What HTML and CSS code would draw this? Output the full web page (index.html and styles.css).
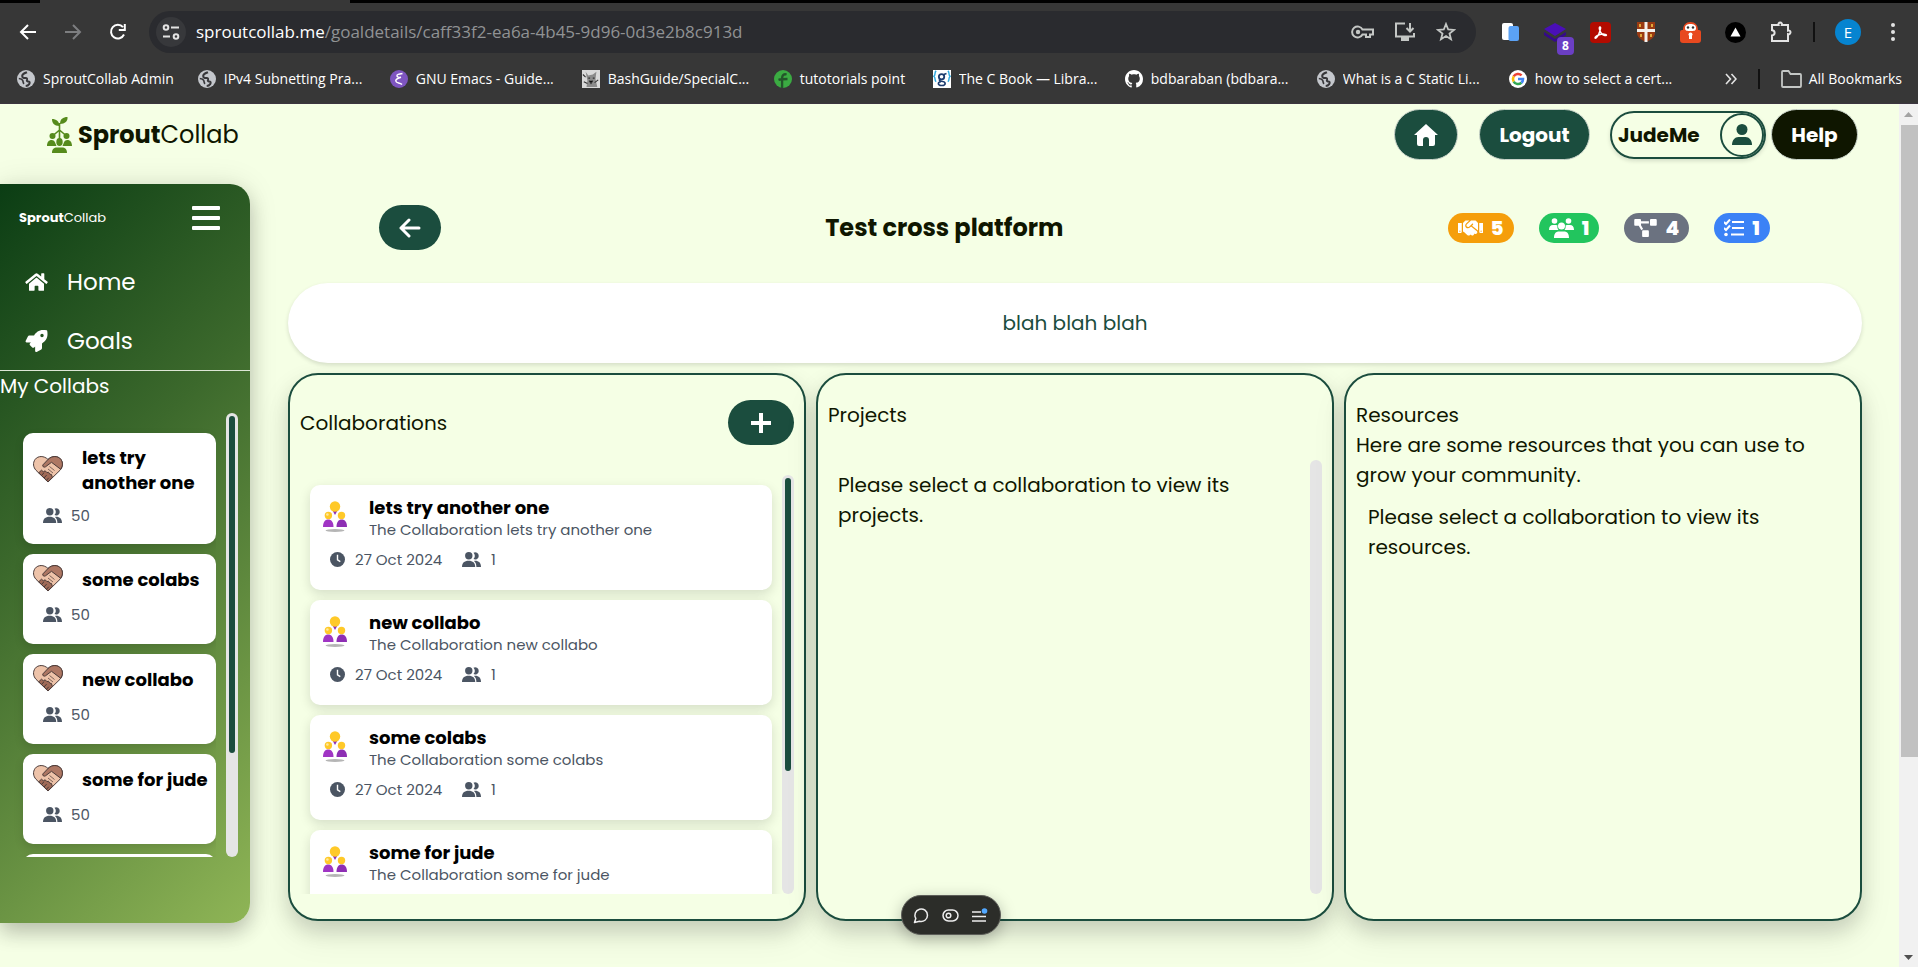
FILE: index.html
```html
<!DOCTYPE html>
<html lang="en">
<head>
<meta charset="utf-8">
<title>SproutCollab</title>
<link rel="stylesheet" href="styles.css">
</head>
<body>
<svg class="sprite" aria-hidden="true">
  <symbol id="i-globe" viewBox="0 0 18 18"><circle cx="9" cy="9" r="9" fill="#c4c7cc"/><path d="M10 2.200C8 3 5.600 3.600 5.200 5.600c-.3 2 1.500 2.600 3.100 2.400 1.600-.2 2 .6 1.700 1.700-.3 1-.2 1.800.9 1.700 1.500-.1 2.400 1 1.300 2.700-.8 1.200-2.200 1.900-3.500 2" fill="none" stroke="#37373a" stroke-width="2"/><path d="M1.800 8.500c1.500.1 3.300.5 3.900 1.900.5 1.200.3 2.500 1.300 3.500" fill="none" stroke="#37373a" stroke-width="1.600"/></symbol>
  <symbol id="i-users" viewBox="0 0 19 15"><path d="M11.500.7a3.600 3.600 0 1 1 0 6.400 5 5 0 0 0 0-6.400z"/><circle cx="6.800" cy="3.800" r="3.700"/><path d="M0 15c0-4 2.300-6.200 6.600-6.200S13.200 11 13.200 15z"/><path d="M12 8.900c4.400-.5 7 1.800 7 6.100h-4.600c0-2.800-.7-4.700-2.400-6.100z"/></symbol>
  <symbol id="i-clock" viewBox="0 0 16 16"><circle cx="8" cy="8" r="8"/><path d="M8 3v5.500l3 1.800" fill="none" stroke="#fff" stroke-width="1.500"/></symbol>
  <symbol id="i-heart" viewBox="0 0 30 27"><path d="M15 3.500C11-.5 5-.3 2.200 3.300-.5 7 .3 11.300 3 14.300L15 26l12-11.700c2.700-3 3.500-7.300.8-11C25-.3 19-.5 15 3.500z" fill="#eec3a9" stroke="#4a3a38"/><path d="M15 3.500C19-.5 25-.3 27.800 3.300c2.400 3.300 2 7-.2 9.900L18.500 6.300l-6 4.500c-1.600 1-3.400-.4-2.600-1.900z" fill="#ad7763" stroke="#4a3a38"/><path d="m5.700 16.800 2.800-2.600 1.800 1.600 1.900-1 1.700 1.800 1.600-.4 1.300 2 1.600.2 1 3-4.400 4.400z" fill="#a06a57" stroke="#4a3a38"/><path d="m8.500 19.500 2.400-2.700M11 22l2.600-2.900M13.500 24.300l2.200-2.500" stroke="#4a3a38"/><path d="m16.500 10.500 5 4M15 13l5 4" stroke="#4a3a38" stroke-width=".7"/></symbol>
  <symbol id="i-team" viewBox="0 0 24 31"><ellipse cx="12" cy="29.500" rx="9.500" ry="1.500" fill="#b5b5b5"/><path d="M0 26c0-5 2-7.500 5.200-7.500S10.500 21 10.500 26z" fill="#a035c4"/><path d="M13.500 26c0-5 2-7.500 5.200-7.500S24 21 24 26z" fill="#8e2fb4"/><path d="M9.800 10h4.400L12 14z" fill="#8e2fb4"/><circle cx="5.400" cy="14.500" r="3.700" fill="#ffc928"/><circle cx="18.500" cy="14.500" r="3.700" fill="#ffc928"/><circle cx="4.400" cy="13.500" r="1.300" fill="#ffe9a0"/><circle cx="12" cy="5.500" r="5.200" fill="#ffc928"/></symbol>
</svg>

<header class="browser">
  <div class="strip"><div class="tab-foot"></div></div>
  <div class="toolbar">
    <nav class="nav-buttons">
      <button aria-label="Back"><svg width="18" height="18" viewBox="0 0 18 18"><path d="M17 9H2M9 2 2 9l7 7" fill="none" stroke="#fff" stroke-width="2"/></svg></button>
      <button aria-label="Forward"><svg width="18" height="18" viewBox="0 0 18 18"><path d="M1 9h15M9 2l7 7-7 7" fill="none" stroke="#7d7e80" stroke-width="2"/></svg></button>
      <button aria-label="Reload"><svg width="18" height="18" viewBox="0 0 18 18"><path d="M15 11.500A6.800 6.800 0 1 1 14 4.200M15.800 1v6h-6" fill="none" stroke="#fff" stroke-width="2"/></svg></button>
    </nav>
    <div class="address">
      <button class="site-info" aria-label="Site information"><svg width="18" height="16" viewBox="0 0 18 16"><g fill="none" stroke="#e3e3e3" stroke-width="2"><circle cx="4" cy="3.500" r="2.300"/><path d="M9 3.500h8M1 12.500h7"/><circle cx="14" cy="12.500" r="2.300"/></g></svg></button>
      <p class="url"><span class="host">sproutcollab.me</span>/goaldetails/caff33f2-ea6a-4b45-9d96-0d3e2b8c913d</p>
      <button aria-label="Passwords"><svg width="23" height="16" viewBox="0 0 23 16"><g fill="none" stroke="#c4c7c5" stroke-width="2"><path d="M11.500 5.500a5.500 5.500 0 1 0 0 5H15V13h4v-2.500h3v-5z"/></g><circle cx="7" cy="8" r="2.200" fill="#c4c7c5"/></svg></button>
      <button aria-label="Install"><svg width="22" height="20" viewBox="0 0 22 20"><path d="M11 1.500H2v13h18V11M16 1v8M12.500 6l3.500 3.500L19.500 6" fill="none" stroke="#c4c7c5" stroke-width="2"/><path d="M7 15h8v4H7z" fill="#c4c7c5"/></svg></button>
      <button aria-label="Bookmark"><svg width="20" height="20" viewBox="0 0 20 20"><path d="m10 2 2.200 5.500 5.800.4-4.500 3.700 1.500 5.700-5-3.200-5 3.200 1.500-5.700L2 7.900l5.800-.4z" fill="none" stroke="#c4c7c5" stroke-width="1.800"/></svg></button>
    </div>
    <div class="extensions">
      <button aria-label="Reader"><svg width="18" height="20" viewBox="0 0 18 20"><rect width="11" height="17" y="1" rx="2" fill="#fff"/><rect x="6.500" y="4" width="10.500" height="15" rx="2" fill="#5ba2f5"/></svg></button>
      <button class="badged" aria-label="Blocker"><svg width="24" height="20" viewBox="0 0 24 20"><path d="M11 1 22 7 11 14 0 7z" fill="#4a0fb8"/><path d="m0 10 11 7 11-7v3l-11 7-11-7z" fill="#35088c"/></svg><span class="badge">8</span></button>
      <button aria-label="PDF"><svg width="21" height="21" viewBox="0 0 21 21"><rect width="21" height="21" rx="4" fill="#b30b00"/><path d="M10 5c-1.500 0-.5 4 1.500 6.500s5 2.500 5 1.500-4-1.300-6.500-.5S4.500 15 5 16s3-1.500 4-4.500S11.500 5 10 5z" fill="none" stroke="#fff" stroke-width="1.400"/></svg></button>
      <button aria-label="Shield"><svg width="18" height="20" viewBox="0 0 18 20"><path d="M0 0h18v11c0 4-4 7-9 9-5-2-9-5-9-9z" fill="#9a3a12"/><path d="M7.500 0h3v7H18v3h-7.500v10h-3V10H0V7h7.500z" fill="#f5f2ee"/><path d="M3 2v3M15 2v3M4 12v3M14 12v3" stroke="#e0a93c" stroke-width="2"/></svg></button>
      <button aria-label="Privacy"><svg width="21" height="21" viewBox="0 0 21 21"><path d="M3 8c0-5 3-8 7.500-8S18 3 18 8h1a2 2 0 0 1 2 2v8a3 3 0 0 1-3 3H3a3 3 0 0 1-3-3v-8a2 2 0 0 1 2-2z" fill="#e8491f"/><path d="M5 6c0-3 2-4 5.500-4S16 3 16 6s-2 3-5.500 3S5 9 5 6z" fill="#fff"/><circle cx="8" cy="5.500" r="1.200" fill="#333"/><circle cx="13" cy="5.500" r="1.200" fill="#333"/><path d="M9 17v-4h3v4z" fill="#fff"/><circle cx="10.500" cy="12.500" r="2" fill="#fff"/></svg></button>
      <button aria-label="Deploy"><svg width="21" height="21" viewBox="0 0 21 21"><circle cx="10.500" cy="10.500" r="10.500"/><path d="m10.500 5.500 5 9h-10z" fill="#fff"/></svg></button>
      <button aria-label="Extensions"><svg width="22" height="22" viewBox="0 0 22 22"><path d="M2 4h6.500a1.800 1.800 0 1 1 3.400 0H18v5.500a1.900 1.900 0 1 1 0 3.600V20H2v-5.500c3.500-.3 3.500-5 0-5.300z" fill="none" stroke="#e3e3e3" stroke-width="2"/></svg></button>
      <span class="divider"></span>
      <button class="avatar">E</button>
      <button aria-label="Menu"><svg width="6" height="20" viewBox="0 0 6 20" fill="#e3e3e3"><circle cx="3" cy="3" r="2"/><circle cx="3" cy="10" r="2"/><circle cx="3" cy="17" r="2"/></svg></button>
    </div>
  </div>
  <nav class="bookmarks">
    <a href="#"><svg class="fav"><use href="#i-globe"/></svg><span>SproutCollab Admin</span></a>
    <a href="#"><svg class="fav"><use href="#i-globe"/></svg><span class="cut">IPv4 Subnetting Pra...</span></a>
    <a href="#"><svg class="fav" viewBox="0 0 18 18"><circle cx="9" cy="9" r="9" fill="#7e55c0"/><path d="M12.500 3.500C9 4 6.500 4.500 7 6s3 1.500 4 1.200C8 8 5.500 9 5.800 11c.3 2.500 4 1.300 6.200 3.500" fill="none" stroke="#fff" stroke-width="1.500"/></svg><span class="cut">GNU Emacs - Guide...</span></a>
    <a href="#"><svg class="fav" viewBox="0 0 20 20"><path fill="#d9d9d9" d="M0 0h20v20H0z"/><path d="M4 2l3 4 5-1 4-3-1 8 2 9H5l1-7z" fill="#8b8b8b"/><path d="M1 5l3 3M2 13l4 2M14 14l4-3M8 12l2 3 2-3M7 9h2M12 9h2" stroke="#333" stroke-width="1.200"/></svg><span class="cut">BashGuide/SpecialC...</span></a>
    <a href="#"><svg class="fav" viewBox="0 0 20 20"><circle cx="10" cy="10" r="10" fill="#3bab42"/><path d="M9 20V9c0-3 2-5 5-4M5 11c3-1 7-1 10-1" fill="none" stroke="#23552a" stroke-width="2.600"/></svg><span class="mid">tutotorials point</span></a>
    <a href="#"><svg class="fav" viewBox="0 0 20 20"><path fill="#fff" d="M0 0h20v20H0z"/><path d="M3.500 1C1 3 3.500 5 1 7c2.500 2 0 4 2.500 6M16.500 1C19 3 16.500 5 19 7c-2.500 2 0 4-2.500 6" fill="none" stroke="#2ba8e0" stroke-width="1.600"/><circle cx="9.500" cy="7.500" r="3" fill="none" stroke="#1d3c6e" stroke-width="2"/><path d="M12 5l3-1M7.500 10.500c-2 3 6 1 6 4.500 0 3-7.500 3-7.500 0 0-1.500 1.500-2 3-2" fill="none" stroke="#1d3c6e" stroke-width="1.800"/></svg><span class="cut">The C Book — Libra...</span></a>
    <a href="#"><svg class="fav" viewBox="0 0 16 16"><path fill="#fff" d="M8 0C3.580 0 0 3.580 0 8c0 3.540 2.290 6.530 5.470 7.590.4.070.55-.17.55-.38 0-.19-.01-.82-.01-1.490-2.010.37-2.530-.49-2.690-.94-.09-.23-.48-.94-.82-1.130-.28-.15-.68-.52-.01-.53.63-.01 1.080.58 1.230.82.72 1.210 1.870.87 2.330.66.070-.52.28-.87.51-1.070-1.780-.2-3.640-.89-3.640-3.950 0-.87.31-1.590.82-2.150-.08-.2-.36-1.020.08-2.120 0 0 .67-.21 2.200.82.64-.18 1.320-.27 2-.27s1.360.09 2 .27c1.530-1.040 2.200-.82 2.200-.82.44 1.100.16 1.920.08 2.120.51.56.82 1.270.82 2.150 0 3.070-1.870 3.750-3.650 3.950.29.25.54.73.54 1.480 0 1.070-.01 1.930-.01 2.200 0 .21.15.46.55.38A8.010 8.010 0 0 0 16 8c0-4.420-3.580-8-8-8z"/></svg><span class="cut">bdbaraban (bdbara...</span></a>
    <a href="#"><svg class="fav"><use href="#i-globe"/></svg><span class="cut">What is a C Static Li...</span></a>
    <a href="#"><svg class="fav" viewBox="0 0 20 20"><circle cx="10" cy="10" r="10" fill="#fff"/><g fill="none" stroke-width="2.800"><path d="M14 6a5.600 5.600 0 0 0-8.800 1.200" stroke="#ea4335"/><path d="M5.200 7.200a5.600 5.600 0 0 0 0 5.600" stroke="#fbbc05"/><path d="M5.200 12.800a5.600 5.600 0 0 0 8.600 1.400" stroke="#34a853"/><path d="M13.800 14.200A5.600 5.600 0 0 0 15.600 10H10" stroke="#4285f4"/></g></svg><span class="cut">how to select a cert...</span></a>
    <div class="bookmarks-end">
      <button aria-label="More bookmarks"><svg width="12" height="12" viewBox="0 0 12 12"><path d="m1 1 4.500 5L1 11M6.500 1 11 6l-4.500 5" fill="none" stroke="#e3e3e3" stroke-width="1.600"/></svg></button>
      <span class="divider"></span>
      <a href="#"><svg width="21" height="18" viewBox="0 0 21 18"><path d="M1 2a1 1 0 0 1 1-1h5.500l2 3H19a1 1 0 0 1 1 1v11a1 1 0 0 1-1 1H2a1 1 0 0 1-1-1z" fill="none" stroke="#c4c7c5" stroke-width="1.800"/></svg><span>All Bookmarks</span></a>
    </div>
  </nav>
</header>

<div class="viewport">
  <div class="app">
    <header class="site-header">
      <a href="#" class="brand">
        <svg width="25" height="36" viewBox="0 0 25 36" fill="#568b1c"><path d="M12.500 9C7 9 5 6 5 2c4 0 7.500 2.500 7.500 7z"/><path d="M13 7c0-5 3-7 7.500-7C21 4 18 7 13 7z"/><path d="M12.500 6v18M12.500 13 5.500 19M12.500 13l7 6" stroke="#568b1c" stroke-width="1.600"/><circle cx="5.500" cy="19" r="3"/><circle cx="19.500" cy="19" r="3"/><ellipse cx="12.500" cy="25" rx="3.200" ry="4"/><path d="M0 29c0-4 2-6 4.500-6 2 0 3.200 1 3.800 3l1.200 3zM15.500 29l1.200-3c.6-2 1.800-3 3.800-3 2.500 0 4.500 2 4.500 6zM5 36c0-4 2-5.500 5-5.500h5c3 0 5 1.500 5 5.500z"/></svg>
        <span><b>Sprout</b>Collab</span>
      </a>
      <nav class="account">
        <button class="pill home" aria-label="Home"><svg width="24" height="22" viewBox="0 0 24 22" fill="#fff"><path d="M12 0 24 11h-3v9a2 2 0 0 1-2 2h-4v-6a3 3 0 0 0-6 0v6H5a2 2 0 0 1-2-2v-9H0z"/></svg></button>
        <button class="pill logout">Logout</button>
        <button class="user"><span>JudeMe</span><span class="user-icon"><svg width="20" height="21" viewBox="0 0 20 21" fill="#1b4d3e"><circle cx="10" cy="5.500" r="5.500"/><path d="M0 21c0-5 3-8 6.500-8h7c3.500 0 6.500 3 6.500 8z"/></svg></span></button>
        <button class="pill help">Help</button>
      </nav>
    </header>

    <div class="workspace">
      <aside class="sidebar">
        <div class="side-top">
          <span class="side-brand"><b>Sprout</b>Collab</span>
          <button aria-label="Toggle menu"><svg width="28" height="25" viewBox="0 0 28 25" fill="#fff"><rect width="28" height="4" rx="1"/><rect y="10" width="28" height="4" rx="1"/><rect y="20" width="28" height="4" rx="1"/></svg></button>
        </div>
        <nav class="side-nav">
          <a href="#"><svg width="23" height="20" viewBox="0 0 576 512" fill="#fff"><path d="M280.370 148.260L96 300.110V464a16 16 0 0 0 16 16l112.060-.29a16 16 0 0 0 15.920-16V368a16 16 0 0 1 16-16h64a16 16 0 0 1 16 16v95.640a16 16 0 0 0 16 16.050L464 480a16 16 0 0 0 16-16V300L295.670 148.260a12.190 12.190 0 0 0-15.300 0zM571.600 251.470L488 182.560V44.050a12 12 0 0 0-12-12h-56a12 12 0 0 0-12 12v72.610L318.470 43a48 48 0 0 0-61 0L4.340 251.470a12 12 0 0 0-1.600 16.900l25.500 31A12 12 0 0 0 45.150 301l235.220-193.740a12.190 12.190 0 0 1 15.300 0L530.900 301a12 12 0 0 0 16.900-1.600l25.500-31a12 12 0 0 0-1.700-16.930z"/></svg>Home</a>
          <a href="#"><svg width="23" height="22" viewBox="0 0 512 512" fill="#fff"><path d="M505.100 19.100C504 13.600 498.500 8.100 493 6.900 460.700 0 435.500 0 410.400 0 307.200 0 245.300 55.200 199 128H94.800c-16.300 0-35.500 11.900-42.900 26.500L2.500 253.300A28.400 28.400 0 0 0 0 264a24 24 0 0 0 24 24h103.800l-22.500 22.500c-11.300 11.300-13 32.200 0 45.200l50.900 50.900c11.200 11.200 32.200 13.200 45.300 0l22.500-22.500V488a24 24 0 0 0 24 24 28.600 28.600 0 0 0 10.700-2.500l98.700-49.400c14.700-7.300 26.600-26.500 26.600-42.900V312.800C456.600 266.500 512 204.400 512 101.700c0-25.200 0-50.400-6.900-82.600zM384 168a40 40 0 1 1 40-40 40 40 0 0 1-40 40z"/></svg>Goals</a>
        </nav>
        <h2>My Collabs</h2>
        <div class="side-scroll">
          <ul class="side-list">
            <li><svg class="heart"><use href="#i-heart"/></svg><b>lets try another one</b><span class="count"><svg class="users"><use href="#i-users"/></svg>50</span></li>
            <li><svg class="heart"><use href="#i-heart"/></svg><b>some colabs</b><span class="count"><svg class="users"><use href="#i-users"/></svg>50</span></li>
            <li><svg class="heart"><use href="#i-heart"/></svg><b>new collabo</b><span class="count"><svg class="users"><use href="#i-users"/></svg>50</span></li>
            <li><svg class="heart"><use href="#i-heart"/></svg><b>some for jude</b><span class="count"><svg class="users"><use href="#i-users"/></svg>50</span></li>
            <li></li>
          </ul>
          <div class="track"><div class="thumb side-thumb"></div></div>
        </div>
      </aside>

      <main class="goal">
        <div class="goal-head">
          <button class="round back" aria-label="Back"><svg width="22" height="20" viewBox="0 0 22 20"><path d="M20 10H2M10 2l-8 8 8 8" fill="none" stroke="#fff" stroke-width="3" stroke-linecap="round" stroke-linejoin="round"/></svg></button>
          <h1>Test cross platform</h1>
          <div class="stats">
            <span class="stat orange"><svg width="25" height="20" viewBox="0 0 640 512" fill="#fff"><path d="M434.700 64h-85.900c-8 0-15.700 3-21.600 8.400l-98.300 90c-.1.1-.2.3-.3.400-16.600 15.600-16.300 40.500-2.100 56 12.700 13.900 39.400 17.600 56.100 2.700.1-.1.3-.1.400-.2l79.900-73.200c6.500-5.900 16.700-5.500 22.600 1 6 6.500 5.500 16.600-1 22.600l-26.100 23.900L504 313.800c2.900 2.400 5.500 5 7.900 7.700V128l-54.600-54.600c-5.900-6-14.100-9.400-22.600-9.400zM544 128.200v223.900c0 17.700 14.300 32 32 32h64V128.200h-96zm48 223.900c-8.800 0-16-7.200-16-16s7.200-16 16-16 16 7.200 16 16-7.200 16-16 16zM0 384h64c17.700 0 32-14.300 32-32V128.200H0V384zm48-63.900c8.800 0 16 7.200 16 16s-7.200 16-16 16-16-7.200-16-16c0-8.900 7.200-16 16-16zm435.900 18.600L334.600 217.500l-30 27.500c-29.700 27.100-75.200 24.500-101.700-4.400-26.900-29.400-24.800-74.900 4.400-101.700L289.100 64h-83.800c-8.500 0-16.600 3.400-22.600 9.400L128 128v223.900h18.300l90.500 81.900c27.400 22.300 67.700 18.100 90-9.300l.2-.2 17.900 15.500c15.900 13 39.400 10.500 52.300-5.400l31.400-38.600 5.400 4.400c13.700 11.100 33.900 9.100 45-4.700l9.500-11.700c11.200-13.800 9.100-33.900-4.600-45.100z"/></svg>5</span>
            <span class="stat green"><svg width="25" height="20" viewBox="0 0 25 20" fill="#fff"><circle cx="5.500" cy="3" r="2.800"/><circle cx="19.500" cy="3" r="2.800"/><circle cx="12.500" cy="8" r="3.500"/><path d="M0 12c0-3.500 1.500-5 4-5h3c.7 0 1.200.2 1.500.5-.4 1.700 0 3.300 1 4.500zM25 12c0-3.500-1.500-5-4-5h-3c-.7 0-1.200.2-1.500.5.4 1.700 0 3.300-1 4.500zM5 20c0-4.500 2-6.500 5-6.500h5c3 0 5 2 5 6.500z"/></svg>1</span>
            <span class="stat gray"><svg width="23" height="18" viewBox="0 0 640 512" fill="#fff"><path d="M384 320H256c-17.670 0-32 14.330-32 32v128c0 17.670 14.330 32 32 32h128c17.670 0 32-14.330 32-32V352c0-17.670-14.330-32-32-32zM192 32c0-17.670-14.330-32-32-32H32C14.330 0 0 14.330 0 32v128c0 17.670 14.330 32 32 32h95.720l73.160 128.040C211.980 300.980 232.400 288 256 288h.28L192 175.510V128h224V64H192V32zM608 0H480c-17.670 0-32 14.330-32 32v128c0 17.670 14.330 32 32 32h128c17.670 0 32-14.330 32-32V32c0-17.670-14.330-32-32-32z"/></svg>4</span>
            <span class="stat blue"><svg width="20" height="18" viewBox="0 0 20 18"><path d="m0 3 2 2 4-4.500M0 9l2 2 4-4.500M8 3h12M8 9h12M7 15.500h13" fill="none" stroke="#fff" stroke-width="2"/><circle cx="2" cy="15.500" r="1.800" fill="#fff"/></svg>1</span>
          </div>
        </div>
        <p class="description">blah blah blah</p>
        <div class="columns">
          <section class="panel">
            <div class="panel-head"><h2>Collaborations</h2><button class="round add" aria-label="Add collaboration"><svg width="20" height="20" viewBox="0 0 20 20"><path d="M10 0v20M0 10h20" stroke="#fff" stroke-width="4"/></svg></button></div>
            <div class="panel-scroll">
              <ul class="collab-list">
                <li><svg class="team"><use href="#i-team"/></svg><div class="info"><h3>lets try another one</h3><p>The Collaboration lets try another one</p></div><div class="meta"><svg class="clock"><use href="#i-clock"/></svg><span class="date">27 Oct 2024</span><svg class="users"><use href="#i-users"/></svg>1</div></li>
                <li><svg class="team"><use href="#i-team"/></svg><div class="info"><h3>new collabo</h3><p>The Collaboration new collabo</p></div><div class="meta"><svg class="clock"><use href="#i-clock"/></svg><span class="date">27 Oct 2024</span><svg class="users"><use href="#i-users"/></svg>1</div></li>
                <li><svg class="team"><use href="#i-team"/></svg><div class="info"><h3>some colabs</h3><p>The Collaboration some colabs</p></div><div class="meta"><svg class="clock"><use href="#i-clock"/></svg><span class="date">27 Oct 2024</span><svg class="users"><use href="#i-users"/></svg>1</div></li>
                <li><svg class="team"><use href="#i-team"/></svg><div class="info"><h3>some for jude</h3><p>The Collaboration some for jude</p></div></li>
              </ul>
              <div class="track"><div class="thumb list-thumb"></div></div>
            </div>
          </section>
          <section class="panel">
            <h2>Projects</h2>
            <div class="panel-scroll projects">
              <p>Please select a collaboration to view its projects.</p>
              <div class="track"></div>
            </div>
          </section>
          <section class="panel">
            <h2>Resources</h2>
            <p class="intro">Here are some resources that you can use to grow your community.</p>
            <p class="hint">Please select a collaboration to view its resources.</p>
          </section>
        </div>
      </main>
    </div>

    <div class="floating">
      <button aria-label="Comments"><svg width="17" height="17" viewBox="0 0 17 17"><path d="M1.500 15.500 2.800 11.500A6.300 6.300 0 1 1 6.500 14.300z" fill="none" stroke="#ededed" stroke-width="1.500" stroke-linejoin="round"/></svg></button>
      <button aria-label="Flags"><svg width="17" height="13" viewBox="0 0 17 13"><rect x="1" y="1" width="15" height="11" rx="5.500" fill="none" stroke="#ededed" stroke-width="1.500"/><circle cx="6.500" cy="6.500" r="2.300" fill="none" stroke="#ededed" stroke-width="1.500"/></svg></button>
      <button aria-label="Menu"><svg width="17" height="15" viewBox="0 0 17 15"><path d="M1 4h9M1 8.500h14M1 13h14" stroke="#ededed" stroke-width="1.600"/><circle cx="13.500" cy="3" r="2.800" fill="#52a8ff"/></svg></button>
    </div>
  </div>
  <div class="page-scroll">
    <svg width="19" height="21" viewBox="0 0 19 21"><path d="m5 13 4.500-5 4.500 5z" fill="#a3a3a3"/></svg>
    <div class="page-thumb-area"><div class="page-thumb"></div></div>
    <svg width="19" height="21" viewBox="0 0 19 21"><path d="m5 9 4.500 5L14 9z" fill="#505050"/></svg>
  </div>
</div>
</body>
</html>
```
FILE: styles.css
```css
* { box-sizing: border-box; }
body {
  margin: 0;
  height: 100vh;
  display: flex;
  flex-direction: column;
  overflow: hidden;
  background: #f5ffe5;
  color: #0f1600;
  font: 20px/30px Poppins, Inter, sans-serif;
}
h1, h2, h3, p, ul { margin: 0; padding: 0; font-weight: 400; font-size: inherit; }
ul { list-style: none; }
a { color: inherit; text-decoration: none; }
button { border: 0; padding: 0; background: none; color: inherit; font: inherit; display: flex; align-items: center; justify-content: center; }
svg { display: block; flex: none; }
b { font-weight: 700; }
.sprite { position: absolute; width: 0; height: 0; }

/* browser frame */
.browser { flex: none; background: #373737; color: #fff; font: 14px/20px "Segoe UI", "Open Sans", sans-serif; border-bottom: 1px solid #3c3540; }
.strip { height: 3px; background: #000; padding-left: 40px; }
.tab-foot { width: 310px; height: 3px; background: #373737; }
.toolbar { display: flex; align-items: center; padding: 8px 25px 8px 0; height: 58px; }
.nav-buttons { display: flex; gap: 27px; padding: 0 22px 0 19px; flex: none; }
.address { flex: 1; height: 42px; border-radius: 21px; background: #2a2b2f; display: flex; align-items: center; gap: 20px; padding: 0 20px 0 7px; }
.site-info { width: 30px; height: 30px; border-radius: 50%; background: #37383b; }
.url { flex: 1; margin-left: -10px; font-size: 17px; line-height: 24px; color: #909294; white-space: nowrap; }
.host { color: #fff; }
.extensions { display: flex; align-items: center; margin-left: 12px; }
.extensions button { width: 45px; height: 32px; }
.badged { position: relative; }
.badge { position: absolute; right: 4px; bottom: -7px; width: 17px; height: 18px; border-radius: 4px; background: #6b3fc4; font: 700 12px/18px "Open Sans", sans-serif; }
.divider { width: 2px; height: 20px; background: #111; }
.extensions .divider { margin: 0 20px 0 10px; }
.extensions .avatar { width: 26px; height: 26px; border-radius: 50%; background: #0684d0; font-size: 15px; }
.extensions .avatar + button { width: 24px; margin-left: 20px; margin-right: -12px; }
.bookmarks { display: flex; align-items: center; height: 45px; gap: 23px; padding: 0 16px 3px; margin-top: -3px; white-space: nowrap; }
.bookmarks a { display: flex; align-items: center; gap: 7px; }
.fav { width: 20px; height: 20px; padding: 1px; }
.cut { width: 142px; overflow: hidden; }
.mid { width: 109px; }
.bookmarks-end { margin-left: auto; display: flex; align-items: center; gap: 21px; }

/* page */
.viewport { flex: 1; min-height: 0; display: flex; }
.app { flex: 1; min-width: 0; display: flex; flex-direction: column; position: relative; }
.site-header { height: 80px; flex: none; display: flex; justify-content: space-between; align-items: flex-start; padding: 5px 41px 0 47px; }
.brand { display: flex; align-items: center; gap: 6px; margin-top: 8px; font-size: 24px; line-height: 36px; }
.account { display: flex; align-items: center; font-weight: 700; }
.pill { height: 51px; border-radius: 26px; border: 1px solid #c9d3c9; background: #1b4d3e; color: #fff; }
.home { width: 64px; }
.logout { width: 111px; margin: 0 20px 0 21px; }
.user { width: 156px; height: 48px; border: 2px solid #1b4d3e; border-radius: 24px; justify-content: space-between; padding-left: 6px; box-shadow: 0 2px 4px #0002; }
.user-icon { width: 44px; height: 44px; border: 2px solid #1b4d3e; border-radius: 50%; display: flex; align-items: center; justify-content: center; }
.help { width: 87px; margin-left: 5px; background: #0f1600; }

.workspace { flex: 1; min-height: 0; display: flex; }
.sidebar { width: 250px; flex: none; margin-bottom: 44px; padding-bottom: 66px; display: flex; flex-direction: column; color: #fff; background: linear-gradient(135deg, #0b3d14, #3c692c 40%, #8fb556); border-radius: 0 20px 20px 0; box-shadow: 0 10px 20px #0003, 0 0 30px #0000001a; }
.side-top { display: flex; justify-content: space-between; align-items: center; padding: 19px 30px 19px 19px; font-size: 13px; }
.side-nav { font-size: 23px; line-height: 60px; border-bottom: 1px solid #dde6d5; }
.side-nav a { display: flex; align-items: center; gap: 19px; height: 59px; padding-left: 25px; }
.sidebar h2 { margin-bottom: 12px; }
.side-scroll { flex: 1; min-height: 0; display: flex; justify-content: space-between; padding-right: 12px; }
.side-list { width: 216px; padding: 20px 0 0 23px; overflow: hidden; }
.side-list li { display: grid; grid-template-columns: 30px 1fr; column-gap: 19px; align-items: center; min-height: 90px; margin-bottom: 10px; padding: 10px 2px 16px 10px; border-radius: 10px; background: #fff; color: #000; font-size: 18px; line-height: 25px; box-shadow: 0 4px 10px #0002; }
.side-list b { padding-top: 2px; }
.heart { width: 30px; height: 27px; }
.count { grid-column: 1 / 3; display: flex; align-items: center; gap: 9px; padding: 8px 0 0 10px; font-size: 15px; color: #4b5563; }
.users { width: 19px; height: 15px; fill: #4b5563; }
.clock { width: 15px; height: 15px; fill: #4b5563; }
.track { width: 12px; flex: none; border-radius: 6px; background: #e5e5e5; padding: 3px; }
.thumb { width: 6px; border-radius: 3px; background: #1b4d3e; }
.side-thumb { height: 77%; }
.list-thumb { height: 71%; }

.goal { flex: 1; min-width: 0; display: flex; flex-direction: column; padding: 0 37px 46px 38px; }
.goal-head { display: flex; justify-content: space-between; align-items: center; padding: 21px 92px 33px 91px; }
.round { height: 45px; border-radius: 23px; background: #1b4d3e; }
.back { width: 62px; }
.goal-head h1 { font-size: 24px; font-weight: 700; }
.stats { display: flex; gap: 25px; }
.stat { display: flex; align-items: center; gap: 8px; padding: 0 10px; height: 30px; border-radius: 15px; color: #fff; font-weight: 800; }
.orange { background: #f59e0b; }
.green { background: #22c55e; }
.gray { background: #6b7280; }
.blue { background: #3b82f6; }
.description { padding: 25px; border-radius: 40px; background: #fff; color: #1b4d3e; text-align: center; box-shadow: 0 2px 4px #0002; }
.columns { flex: 1; min-height: 0; display: grid; grid-template-columns: repeat(3, 1fr); gap: 10px; margin-top: 10px; }
.panel { min-height: 0; display: flex; flex-direction: column; padding: 25px 10px; border: 2px solid #1b4d3e; border-radius: 30px; background: #f5ffe5; box-shadow: 0 10px 20px #0002, 0 15px 35px #00000014; }
.panel-head { display: flex; justify-content: space-between; align-items: center; margin-bottom: 30px; }
.add { width: 66px; }
.panel-scroll { flex: 1; min-height: 0; display: flex; justify-content: space-between; }
.projects { margin-top: 30px; }
.projects p { padding: 10px 40px 0 10px; }
.intro { padding-right: 30px; }
.hint { padding: 12px 60px 0 12px; }
.collab-list { flex: 1; padding: 10px; overflow: hidden; }
.collab-list li { display: grid; grid-template-columns: 24px 1fr; column-gap: 22px; align-content: start; height: 105px; margin-bottom: 10px; padding: 10px 13px; border-radius: 10px; background: #fff; box-shadow: 0 4px 12px #0002; }
.team { width: 24px; height: 31px; margin-top: 6px; }
.info h3 { font-size: 18px; font-weight: 700; line-height: 25px; color: #000; }
.info p { font-size: 15px; line-height: 20px; color: #4b5563; }
.meta { grid-column: 1 / 3; display: flex; align-items: center; gap: 10px; margin-top: 7px; padding-left: 7px; font-size: 15px; line-height: 25px; color: #4b5563; }
.date { width: 97px; }

.floating { position: absolute; left: 47%; bottom: 32px; width: 100px; height: 40px; margin-left: 8px; border-radius: 20px; border: 1px solid #5c5d58; background: #2c2d29; display: flex; align-items: center; justify-content: space-evenly; box-shadow: 0 4px 16px #0004; }

.page-scroll { width: 19px; flex: none; display: flex; flex-direction: column; background: #f1f1f1; }
.page-thumb-area { flex: 1; padding-left: 2px; }
.page-thumb { height: 77%; background: #c1c1c1; }
```
